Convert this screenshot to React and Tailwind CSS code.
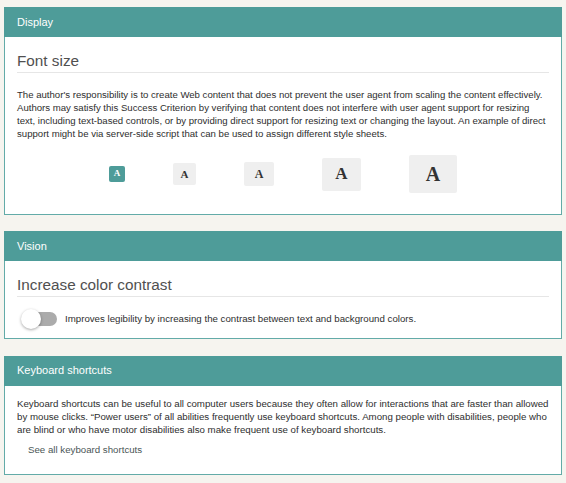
import React from "react";

const sans = { fontFamily: '"Liberation Sans", Arial, sans-serif' };

function Panel({ title, children, className = "" }) {
  return (
    <section className={`ml-[4px] w-[558px] border border-[#63aba8] bg-white ${className}`}>
      <div className="-mx-px -mt-px h-[30px] bg-[#4e9c99] pl-[13px] flex items-center text-[11px] text-white">
        {title}
      </div>
      {children}
    </section>
  );
}

function SizeBtn({ box, font, active }) {
  return (
    <button
      className={`${box} ${font} flex items-center justify-center rounded-[2px] font-bold ${
        active ? "bg-[#4e9c99] text-white" : "bg-[#efefef] text-[#333]"
      }`}
      style={{ fontFamily: '"Liberation Serif", "Times New Roman", serif' }}
    >
      A
    </button>
  );
}

export default function App() {
  return (
    <div className="min-h-[483px] w-[566px] bg-[#f6f4ef] pt-[7px]" style={sans}>
      <Panel title="Display">
        <div className="px-3 pt-[14px] pb-[21px]">
          <h2 className="border-b border-[#e6e6e6] pb-[1px] text-[15.3px] leading-[20px] text-[#505050]">
            Font size
          </h2>
          <p className="mt-[15px] text-[9.6px] leading-[13px] text-[#2e2e2e]">
            The author's responsibility is to create Web content that does not prevent the user agent from scaling the content effectively. Authors may satisfy this Success Criterion by verifying that content does not interfere with user agent support for resizing text, including text-based controls, or by providing direct support for resizing text or changing the layout. An example of direct support might be via server-side script that can be used to assign different style sheets.
          </p>
          <div className="mt-[15px] flex items-center justify-center gap-[48px]">
            <SizeBtn box="w-[16px] h-[16px]" font="text-[9px]" active />
            <SizeBtn box="w-[23px] h-[22px]" font="text-[11px]" />
            <SizeBtn box="w-[30px] h-[24px]" font="text-[12px]" />
            <SizeBtn box="w-[39px] h-[33px]" font="text-[17px]" />
            <SizeBtn box="w-[48px] h-[38px]" font="text-[20px]" />
          </div>
        </div>
      </Panel>

      <Panel title="Vision" className="mt-[16px]">
        <div className="px-3 pt-[14px] pb-[11px]">
          <h2 className="border-b border-[#e6e6e6] pb-[1px] text-[15.3px] leading-[20px] text-[#505050]">
            Increase color contrast
          </h2>
          <div className="mt-[15px] flex items-center">
            <div className="relative ml-[5px] h-[14px] w-[35px] rounded-full bg-[#ababab]">
              <div className="absolute -left-[1px] -top-[3px] h-[20px] w-[20px] rounded-full bg-white shadow-[0_1px_3px_rgba(0,0,0,0.35)]" />
            </div>
            <span className="ml-[8px] text-[9.7px] text-[#2e2e2e]">
              Improves legibility by increasing the contrast between text and background colors.
            </span>
          </div>
        </div>
      </Panel>

      <Panel title="Keyboard shortcuts" className="mt-[17px]">
        <div className="px-3 pt-[11px] pb-[18px]">
          <p className="text-[9.7px] leading-[13.3px] text-[#2e2e2e]">
            Keyboard shortcuts can be useful to all computer users because they often allow for interactions that are faster than allowed by mouse clicks. “Power users” of all abilities frequently use keyboard shortcuts. Among people with disabilities, people who are blind or who have motor disabilities also make frequent use of keyboard shortcuts.
          </p>
          <a className="mt-[7px] ml-[11px] block text-[9.7px] leading-[13px] text-[#4a5656]">
            See all keyboard shortcuts
          </a>
        </div>
      </Panel>
    </div>
  );
}
